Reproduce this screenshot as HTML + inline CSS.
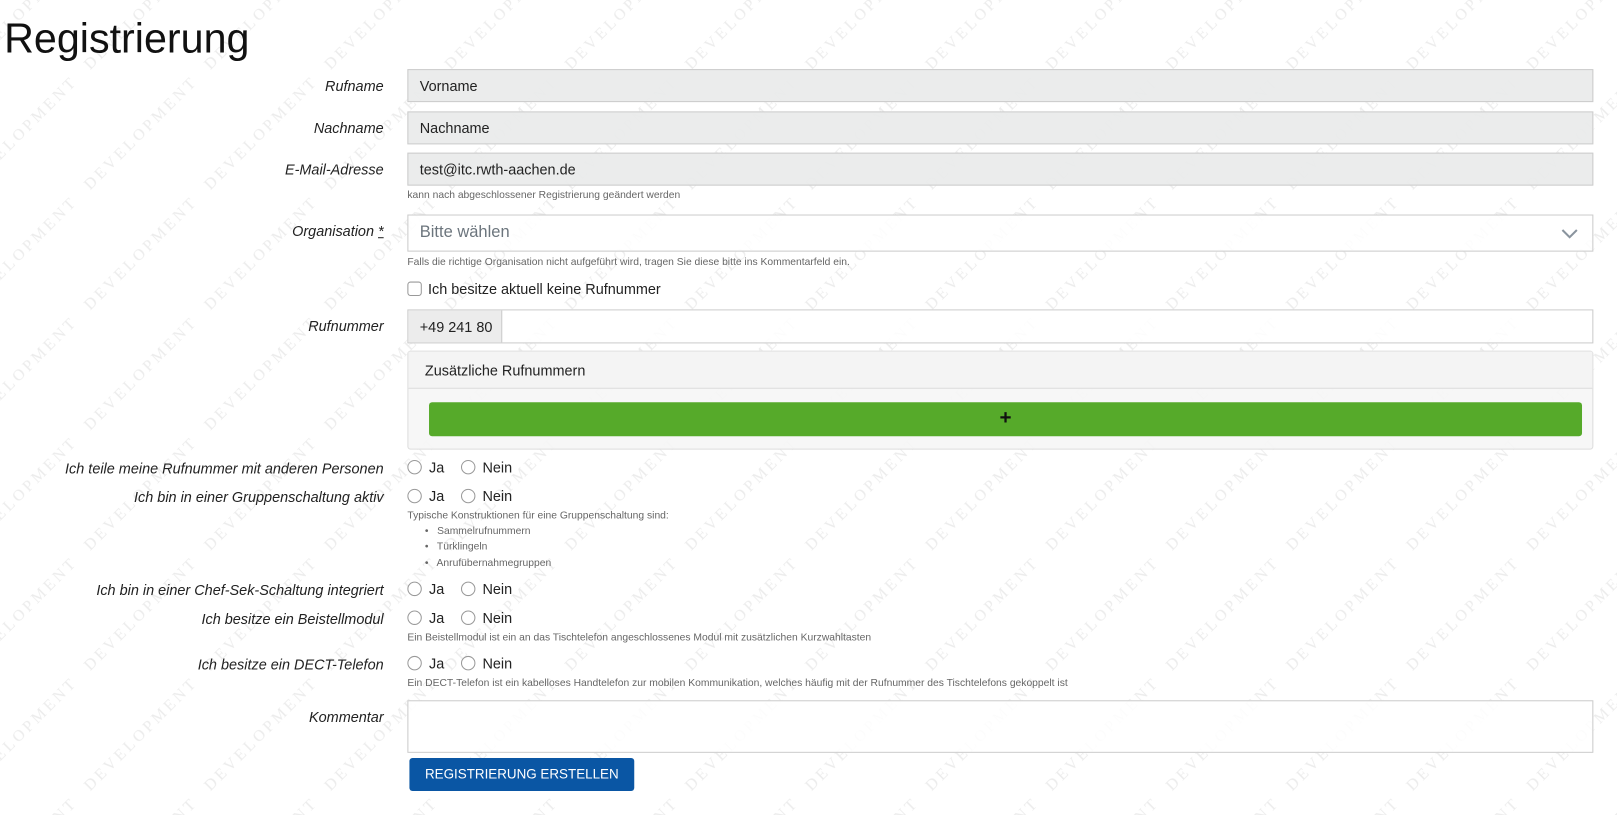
<!DOCTYPE html>
<html><head><meta charset="utf-8"><style>
*{box-sizing:border-box}
body{margin:0;width:1617px;height:815px;background:#fff;font-family:"Liberation Sans",Arial,sans-serif;font-size:14px;color:#222;position:relative;overflow:hidden}
#wm{position:absolute;left:0;top:0;width:1617px;height:815px;z-index:0}
#w{position:absolute;left:0;top:0;width:1568px;height:790px;transform:scale(1.0313);transform-origin:0 0;z-index:1}
.a{position:absolute;z-index:1}
.lbl{position:absolute;z-index:1;right:1196px;font-style:italic;font-size:14px;color:#222;white-space:nowrap}
.inp{position:absolute;z-index:1;left:395px;width:1150px;border:1px solid #ccc;padding-left:11px;font-size:14px;display:flex;align-items:center}
.ro{background:rgba(233,235,235,.93);height:32px}
.help{position:absolute;z-index:1;left:395px;font-size:10px;color:#666;white-space:nowrap}
.rad{position:absolute;z-index:1;left:395px;font-size:14px;display:flex;align-items:center}
.rad i{display:inline-block;width:14px;height:14px;border:1px solid #999;border-radius:50%;margin-right:7px;background:#fff}
.rad span{margin-right:16px}
</style></head><body>
<svg id="wm" xmlns="http://www.w3.org/2000/svg"><defs>
<pattern id="p" width="170" height="170" patternUnits="userSpaceOnUse" x="91" y="0" patternTransform="rotate(-45)">
<text x="8" y="28.4" font-family="Liberation Serif,serif" font-size="16" fill="#ececec" textLength="150" lengthAdjust="spacing">DEVELOPMENT</text>
</pattern>
<pattern id="q" width="170" height="170" patternUnits="userSpaceOnUse" x="6" y="85" patternTransform="rotate(-45)">
<text x="8" y="28.4" font-family="Liberation Serif,serif" font-size="16" fill="#ececec" textLength="150" lengthAdjust="spacing">DEVELOPMENT</text>
</pattern></defs><rect width="1617" height="815" fill="url(#p)"/><rect width="1617" height="815" fill="url(#q)"/></svg>

<div id="w">
<div class="a" style="left:4px;top:16px;font-size:40px;color:#111">Registrierung</div>

<div class="lbl" style="top:75px">Rufname</div>
<div class="inp ro" style="top:67px">Vorname</div>
<div class="lbl" style="top:116px">Nachname</div>
<div class="inp ro" style="top:108px">Nachname</div>
<div class="lbl" style="top:156px">E-Mail-Adresse</div>
<div class="inp ro" style="top:148px">test@itc.rwth-aachen.de</div>
<div class="help" style="top:184px">kann nach abgeschlossener Registrierung geändert werden</div>

<div class="lbl" style="top:216px">Organisation <u>*</u></div>
<div class="inp" style="top:208px;height:36px;font-size:16px;color:#6c757d;background:rgba(255,255,255,.85)">Bitte wählen
<svg style="position:absolute;right:14px;top:13px" width="16" height="10"><path d="M1 1 L8 8 L15 1" fill="none" stroke="#8a949e" stroke-width="2"/></svg></div>
<div class="help" style="top:249px">Falls die richtige Organisation nicht aufgeführt wird, tragen Sie diese bitte ins Kommentarfeld ein.</div>

<div class="a" style="left:395px;top:273px;width:14px;height:14px;border:1px solid #999;border-radius:3px;background:#fff"></div>
<div class="a" style="left:415px;top:272px">Ich besitze aktuell keine Rufnummer</div>

<div class="lbl" style="top:308px">Rufnummer</div>
<div class="inp" style="top:300px;height:33px;padding:0;background:rgba(255,255,255,.85)"><div style="width:91px;height:100%;background:#ececec;border-right:1px solid #ccc;display:flex;align-items:center;padding-left:11px">+49 241 80</div></div>

<div class="a" style="left:395px;top:340px;width:1150px;height:96px;border:1px solid #ddd;border-radius:3px;background:rgba(246,246,246,.9)">
<div style="height:36px;border-bottom:1px solid #ddd;background:rgba(244,244,244,.9);padding:10px 0 0 16px">Zusätzliche Rufnummern</div>
<div style="position:absolute;left:20px;top:49px;width:1118px;height:33px;background:#56aa2a;border-radius:3px;text-align:center;font-size:20px;font-weight:bold;line-height:31px;color:#111">+</div>
</div>

<div class="lbl" style="top:446px">Ich teile meine Rufnummer mit anderen Personen</div>
<div class="rad" style="top:445px"><i></i><span>Ja</span><i></i>Nein</div>
<div class="lbl" style="top:474px">Ich bin in einer Gruppenschaltung aktiv</div>
<div class="rad" style="top:473px"><i></i><span>Ja</span><i></i>Nein</div>
<div class="help" style="top:495px">Typische Konstruktionen für eine Gruppenschaltung sind:</div>
<div class="help" style="top:510px;left:412px">•&nbsp;&nbsp; Sammelrufnummern</div>
<div class="help" style="top:525px;left:412px">•&nbsp;&nbsp; Türklingeln</div>
<div class="help" style="top:541px;left:412px">•&nbsp;&nbsp; Anrufübernahmegruppen</div>
<div class="lbl" style="top:564px">Ich bin in einer Chef-Sek-Schaltung integriert</div>
<div class="rad" style="top:563px"><i></i><span>Ja</span><i></i>Nein</div>
<div class="lbl" style="top:592px">Ich besitze ein Beistellmodul</div>
<div class="rad" style="top:591px"><i></i><span>Ja</span><i></i>Nein</div>
<div class="help" style="top:613px">Ein Beistellmodul ist ein an das Tischtelefon angeschlossenes Modul mit zusätzlichen Kurzwahltasten</div>
<div class="lbl" style="top:636px">Ich besitze ein DECT-Telefon</div>
<div class="rad" style="top:635px"><i></i><span>Ja</span><i></i>Nein</div>
<div class="help" style="top:657px">Ein DECT-Telefon ist ein kabelloses Handtelefon zur mobilen Kommunikation, welches häufig mit der Rufnummer des Tischtelefons gekoppelt ist</div>

<div class="lbl" style="top:687px">Kommentar</div>
<div class="inp" style="top:679px;height:51px;background:rgba(255,255,255,.85)"></div>

<div class="a" style="left:397px;top:735px;width:218px;height:32px;background:#0a56a4;border-radius:3px;color:#fff;font-size:13px;text-align:center;line-height:31px">REGISTRIERUNG ERSTELLEN</div>
</div>
</body></html>
